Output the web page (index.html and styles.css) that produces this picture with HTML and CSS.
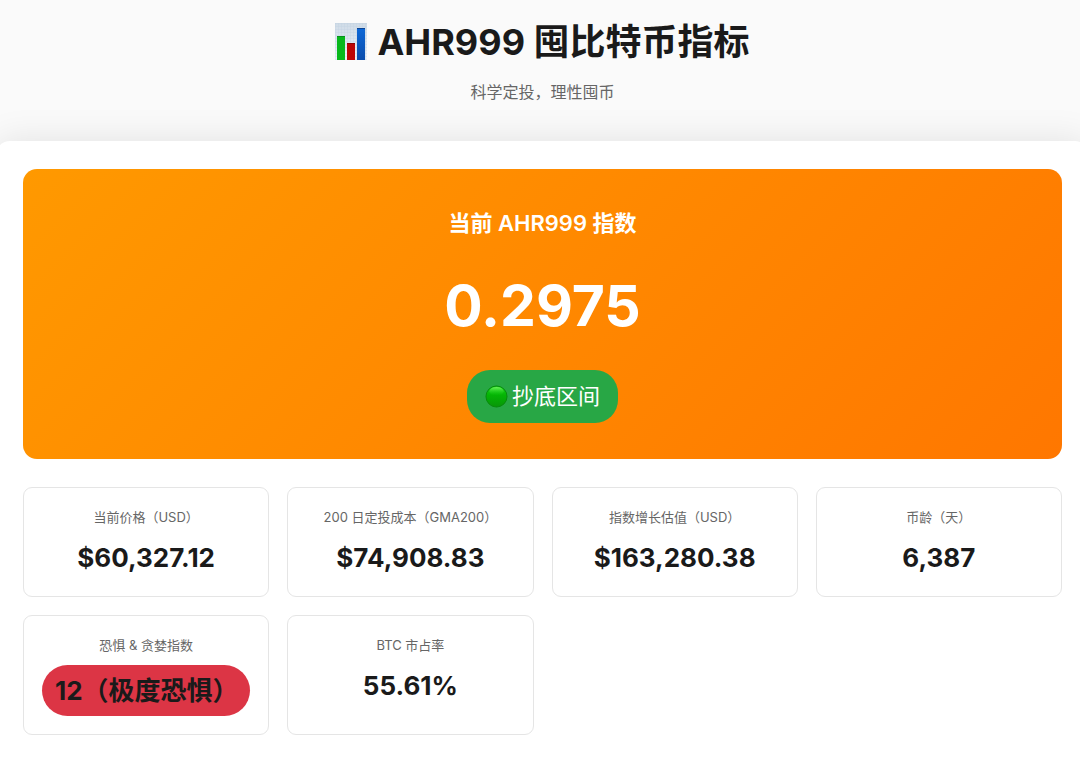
FILE: index.html
```html
<!DOCTYPE html>
<html lang="zh-CN">
<head>
  <meta charset="UTF-8">
  <meta name="viewport" content="width=device-width, initial-scale=1.0">
  <title>AHR999 囤比特币指标</title>
  <link rel="stylesheet" href="styles.css">
</head>
<body>
  <header class="header">
    <h1>
      <svg class="chart-icon" viewBox="0 0 32 37" aria-hidden="true">
        <defs>
          <pattern id="grid" width="3" height="3" patternUnits="userSpaceOnUse">
            <path d="M0 0H3M0 0V3" stroke="#b9cbdc" stroke-width="0.8"/>
          </pattern>
          <linearGradient id="paper" x1="0" y1="0" x2="0" y2="1">
            <stop offset="0" stop-color="#cfdbe7"/>
            <stop offset="1" stop-color="#eef3fa"/>
          </linearGradient>
          <linearGradient id="blue" x1="0" y1="0" x2="0" y2="1">
            <stop offset="0" stop-color="#0d68d8"/>
            <stop offset="1" stop-color="#0a4cac"/>
          </linearGradient>
        </defs>
        <rect width="32" height="37" fill="url(#paper)"/>
        <rect width="32" height="37" fill="url(#grid)" opacity="0.6"/>
        <rect x="2" y="13" width="8" height="24" fill="#08b81c"/>
        <rect x="2" y="13" width="8" height="1" fill="#06921a"/>
        <rect x="12" y="20" width="8" height="17" fill="#bd0505"/>
        <rect x="12" y="20" width="8" height="1" fill="#8d0303"/>
        <rect x="22" y="5" width="8" height="32" fill="url(#blue)"/>
        <rect x="22" y="5" width="8" height="1" fill="#0a4494"/>
      </svg>
      AHR999 囤比特币指标
    </h1>
    <p class="subtitle">科学定投，理性囤币</p>
  </header>

  <main class="container">
    <section class="index-card">
      <h2>当前 AHR999 指数</h2>
      <div class="index-value">0.2975</div>
      <div class="index-status">
        <svg class="dot-icon" viewBox="0 0 24 24" aria-hidden="true">
          <defs>
            <linearGradient id="ball" x1="0" y1="0" x2="0" y2="1">
              <stop offset="0" stop-color="#16d216"/>
              <stop offset="0.45" stop-color="#04b304"/>
              <stop offset="1" stop-color="#089608"/>
            </linearGradient>
            <linearGradient id="shine" x1="0" y1="0" x2="0" y2="1">
              <stop offset="0" stop-color="#6ff25c"/>
              <stop offset="1" stop-color="#10c810" stop-opacity="0"/>
            </linearGradient>
          </defs>
          <circle cx="12" cy="12" r="11" fill="url(#ball)" stroke="#07890c" stroke-width="1"/>
          <ellipse cx="12" cy="6.5" rx="7.5" ry="4.5" fill="url(#shine)"/>
        </svg>
        抄底区间
      </div>
    </section>

    <section class="stats">
      <div class="stat">
        <div class="stat-label">当前价格（USD）</div>
        <div class="stat-value">$60,327.12</div>
      </div>
      <div class="stat">
        <div class="stat-label">200 日定投成本（GMA200）</div>
        <div class="stat-value">$74,908.83</div>
      </div>
      <div class="stat">
        <div class="stat-label">指数增长估值（USD）</div>
        <div class="stat-value">$163,280.38</div>
      </div>
      <div class="stat">
        <div class="stat-label">币龄（天）</div>
        <div class="stat-value">6,387</div>
      </div>
      <div class="stat">
        <div class="stat-label">恐惧 &amp; 贪婪指数</div>
        <div class="stat-value extreme-fear">12（极度恐惧）</div>
      </div>
      <div class="stat">
        <div class="stat-label">BTC 市占率</div>
        <div class="stat-value">55.61%</div>
      </div>
    </section>
  </main>
</body>
</html>
```

FILE: styles.css
```css
* {
  margin: 0;
  padding: 0;
  box-sizing: border-box;
}
body {
  font-family: Inter, "Noto Sans CJK SC", sans-serif;
  background: #fafafa;
  color: #1a1a1a;
  min-height: 100vh;
  display: flex;
  flex-direction: column;
  overflow-x: hidden;
}
.header {
  padding: 14px 0 36px 5px;
  text-align: center;
}
.header h1 {
  display: flex;
  justify-content: center;
  align-items: center;
  gap: 10px;
  font-size: 36px;
  font-weight: 700;
  line-height: 56px;
}
.chart-icon {
  width: 32px;
  height: 37px;
  margin-bottom: 2px;
}
.subtitle {
  margin-top: 9px;
  font-size: 16px;
  line-height: 26px;
  color: #666;
}
.container {
  flex: 1;
  margin: 0 -9px 0 -4px;
  padding: 28px 27px 22px;
  background: #fff;
  border-radius: 14px 14px 0 0;
  box-shadow: 0 0 36px rgba(0,0,0,0.1);
}
.index-card {
  padding: 36px;
  border-radius: 14px;
  background: linear-gradient(135deg, #ff9900, #ff7700);
  color: #fff;
  text-align: center;
}
.index-card h2 {
  font-size: 22px;
  font-weight: 600;
  line-height: 36px;
}
.index-value {
  margin: 18px 0;
  font-size: 57px;
  font-weight: 700;
  line-height: 93px;
}
.index-status {
  display: inline-flex;
  align-items: center;
  gap: 4px;
  padding: 9px 18px;
  border-radius: 23px;
  background: #28a745;
  font-size: 22px;
  line-height: 35px;
  vertical-align: top;
}
.dot-icon {
  width: 23px;
  height: 23px;
}
.stats {
  display: grid;
  grid-template-columns: repeat(4, minmax(0, 1fr));
  gap: 18px;
  margin-top: 28px;
}
.stat {
  padding: 18px;
  border: 1px solid #e5e5e5;
  border-radius: 9px;
  text-align: center;
}
.stat-label {
  margin-bottom: 9px;
  font-size: 13px;
  line-height: 22px;
  color: #666;
}
.stat-value {
  font-size: 26px;
  font-weight: 700;
  line-height: 41px;
  white-space: nowrap;
}
.extreme-fear {
  padding: 5px 13px;
  border-radius: 26px;
  background: #dc3545;
  text-align: left;
}

@media (max-width: 800px) {
  .stats {
    grid-template-columns: repeat(2, minmax(0, 1fr));
  }
}
```
